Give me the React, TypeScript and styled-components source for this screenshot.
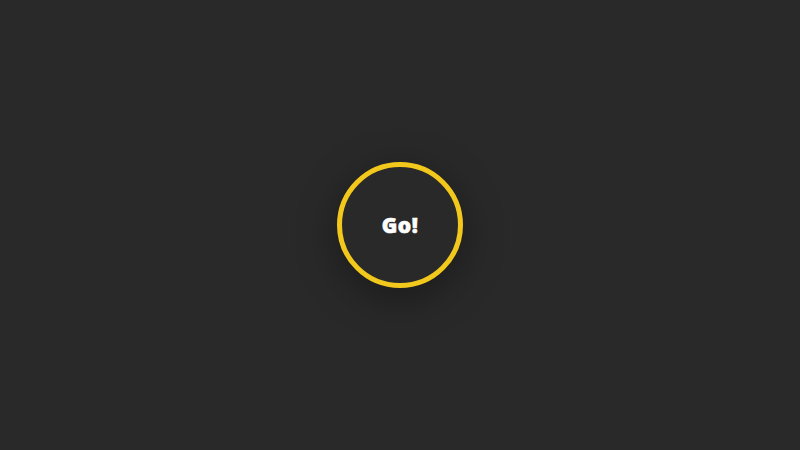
import styled, { createGlobalStyle } from 'styled-components'

const GlobalStyle = createGlobalStyle`
  html, body {
    margin: 0;
    padding: 0;
    background: #292929;
  }
`

const Stage = styled.div`
  width: 100vw;
  height: 100vh;
  display: flex;
  align-items: center;
  justify-content: center;
  background: #292929;
`

const GoButton = styled.button`
  width: 126px;
  height: 126px;
  box-sizing: border-box;
  border-radius: 50%;
  border: 5px solid #f2c81c;
  background: #292929;
  color: #ffffff;
  font-family: 'Open Sans', 'Lato', sans-serif;
  font-weight: 800;
  font-size: 21px;
  letter-spacing: 0.5px;
  -webkit-text-stroke: 0.6px #ffffff;
  display: flex;
  align-items: center;
  justify-content: center;
  box-shadow: 0 10px 40px rgba(0, 0, 0, 0.35);
  cursor: pointer;
  padding: 0;
`

export default function App() {
    return (
        <>
            <GlobalStyle />
            <Stage>
                <GoButton>Go!</GoButton>
            </Stage>
        </>
    )
}
